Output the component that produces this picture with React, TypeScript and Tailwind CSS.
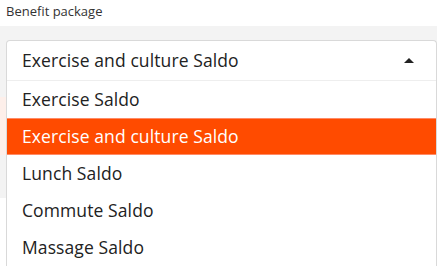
import { useState } from 'react'

const options = [
  'Exercise Saldo',
  'Exercise and culture Saldo',
  'Lunch Saldo',
  'Commute Saldo',
  'Massage Saldo',
]

export default function App() {
  const [selected, setSelected] = useState(1)

  return (
    <div
      className="h-[266px] w-[437px] overflow-hidden bg-white text-[#222]"
      style={{ fontFamily: '"Open Sans", "Noto Sans", sans-serif' }}
    >
      <div className="px-[6px] pt-[3px] pb-[6px] text-[13px] leading-[17px] text-[#333]">
        Benefit package
      </div>
      <div className="relative">
        {/* page content behind the open menu */}
        <div className="h-[172px] bg-[#f3f3f3] pt-[71px]">
          <div className="h-[58px] bg-[#fdefea]" />
        </div>

        <div className="absolute top-[14px] left-[6px] right-0 h-[240px] rounded-t-[4px] border border-b-0 border-[#d9d9d9] bg-white">
          <div className="flex h-[40px] items-center justify-between border-b border-[#eeeeee] pl-[15px] pr-[22px] text-[17.5px] tracking-[0.1px]">
            <span>{options[selected]}</span>
            <span className="h-0 w-0 border-x-[5px] border-b-[5px] border-x-transparent border-b-[#222]" />
          </div>
          <ul>
            {options.map((o, i) => (
              <li
                key={o}
                onClick={() => setSelected(i)}
                className={
                  i === selected
                    ? 'flex h-[37px] items-center border-y border-[#ff8a66] bg-[#ff4b00] pl-[15px] text-[17.5px] tracking-[0.1px] text-white'
                    : 'flex h-[37px] items-center pl-[15px] text-[17.5px] tracking-[0.1px]'
                }
              >
                {o}
              </li>
            ))}
          </ul>
        </div>
      </div>
    </div>
  )
}
